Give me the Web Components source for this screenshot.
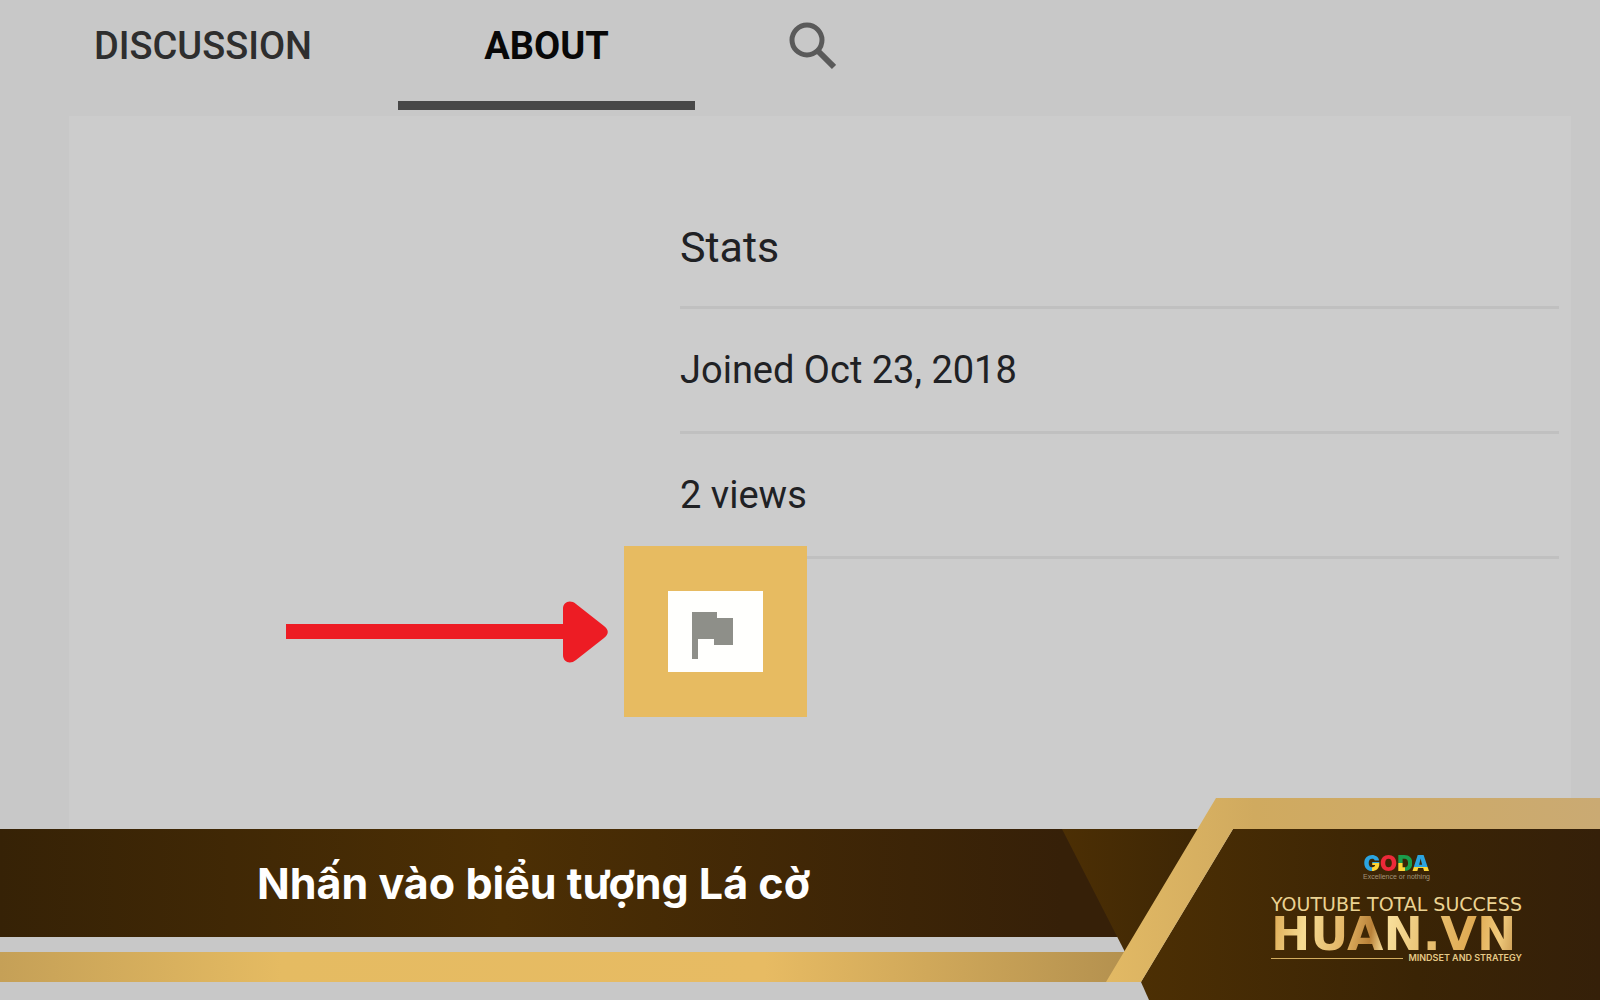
<!DOCTYPE html>
<html lang="vi">
<head>
<meta charset="UTF-8">
<meta name="viewport" content="width=device-width, initial-scale=1.0">
<title>HUAN.VN</title>
<style>
    body {
        margin: 0;
        background: #c8c8c8;
        font-family: Roboto, "Liberation Sans", sans-serif;
    }
</style>
</head>
<body>
<guide-slide>
    <channel-tabs slot="tabs">
        <channel-tab>DISCUSSION</channel-tab>
        <channel-tab active>ABOUT</channel-tab>
        <channel-tab narrow label="Search">
            <svg width="48" height="48" viewBox="0 0 48 48" fill="none" stroke="#5a5a5a" aria-hidden="true">
                <circle cx="19" cy="18" r="15" stroke-width="5"/>
                <path d="M29 28 46 45" stroke-width="6"/>
            </svg>
        </channel-tab>
    </channel-tabs>
    <about-panel>
        <stat-row heading>Stats</stat-row>
        <stat-row>Joined Oct 23, 2018</stat-row>
        <stat-row>2 views</stat-row>
        <flag-callout slot="callout"></flag-callout>
    </about-panel>
    <caption-banner slot="banner">
        Nhấn vào biểu tượng Lá cờ
        <brand-logo slot="logo"></brand-logo>
    </caption-banner>
</guide-slide>

<script>
    class GuideSlide extends HTMLElement {
        connectedCallback() {
            this.attachShadow({ mode: 'open' });
            this.shadowRoot.innerHTML = `
                <style>
                    :host {
                        display: grid;
                        grid-template-rows: auto 1fr 202px;
                        min-height: 100vh;
                        overflow: hidden;
                    }
                    main {
                        display: grid;
                        grid-row: 2 / 4;
                        grid-column: 1;
                        padding: 6px 29px 168px 69px;
                    }
                    footer {
                        grid-row: 3;
                        grid-column: 1;
                        z-index: 1;
                    }
                </style>
                <header><slot name="tabs"></slot></header>
                <main><slot></slot></main>
                <footer><slot name="banner"></slot></footer>
            `;
        }
    }

    class ChannelTabs extends HTMLElement {
        connectedCallback() {
            this.attachShadow({ mode: 'open' });
            this.shadowRoot.innerHTML = `
                <style>
                    :host {
                        display: block;
                    }
                    nav {
                        display: flex;
                        height: 110px;
                        padding-left: 8px;
                    }
                </style>
                <nav><slot></slot></nav>
            `;
        }
    }

    class ChannelTab extends HTMLElement {
        connectedCallback() {
            const label = this.getAttribute('label');
            this.attachShadow({ mode: 'open' });
            this.shadowRoot.innerHTML = `
                <style>
                    :host {
                        display: flex;
                        width: 390px;
                    }
                    :host([active]) {
                        width: 297px;
                    }
                    :host([narrow]) {
                        width: 234px;
                    }
                    button {
                        display: flex;
                        flex: 1;
                        align-items: center;
                        justify-content: center;
                        padding: 0 0 9px;
                        border: 0;
                        border-bottom: 9px solid transparent;
                        background: none;
                        color: #2e2e2e;
                        font: 500 38px/48px Roboto, "Liberation Sans", sans-serif;
                        cursor: pointer;
                    }
                    :host([active]) button {
                        border-color: #484848;
                        color: #080808;
                        font-weight: 700;
                    }
                </style>
                <button type="button" ${label ? `aria-label="${label}"` : ''}><slot></slot></button>
            `;
        }
    }

    class AboutPanel extends HTMLElement {
        connectedCallback() {
            this.attachShadow({ mode: 'open' });
            this.shadowRoot.innerHTML = `
                <style>
                    :host {
                        display: block;
                        position: relative;
                        padding: 68px 12px 0 611px;
                        background: #cccccc;
                    }
                    /* sits over the last divider */
                    .callout {
                        position: absolute;
                        left: 217px;
                        top: 430px;
                    }
                </style>
                <section><slot></slot></section>
                <div class="callout"><slot name="callout"></slot></div>
            `;
        }
    }

    class StatRow extends HTMLElement {
        connectedCallback() {
            this.attachShadow({ mode: 'open' });
            this.shadowRoot.innerHTML = `
                <style>
                    :host {
                        display: flex;
                        align-items: center;
                        box-sizing: border-box;
                        height: 125px;
                        border-bottom: 3px solid #c0c0c0;
                        color: #202124;
                        font-size: 38px;
                        line-height: 48px;
                    }
                    :host([heading]) {
                        padding-top: 4px;
                        font-size: 43px;
                    }
                </style>
                <slot></slot>
            `;
        }
    }

    class FlagCallout extends HTMLElement {
        connectedCallback() {
            this.attachShadow({ mode: 'open' });
            this.shadowRoot.innerHTML = `
                <style>
                    :host {
                        display: flex;
                        align-items: center;
                        gap: 16px;
                    }
                    button {
                        display: flex;
                        align-items: center;
                        justify-content: center;
                        box-sizing: content-box;
                        width: 95px;
                        height: 81px;
                        padding: 0;
                        border: solid #e7bb61;
                        border-width: 45px 44px;
                        background: #fffffd;
                        cursor: pointer;
                    }
                </style>
                <svg width="322" height="62" viewBox="0 0 322 62" fill="#ed1c24" aria-hidden="true">
                    <path d="M0 23H277V8C277 1 284-2 290 3L318 25C323 29 323 33 318 37L290 59C284 64 277 61 277 54V38H0Z"/>
                </svg>
                <button type="button" aria-label="Flag">
                    <svg width="47" height="55" viewBox="0 0 47 55" fill="#8e8f89" aria-hidden="true">
                        <path d="M0 8H25V14H41V41H22V35H6V55H0Z"/>
                    </svg>
                </button>
            `;
        }
    }

    class CaptionBanner extends HTMLElement {
        connectedCallback() {
            this.attachShadow({ mode: 'open' });
            this.shadowRoot.innerHTML = `
                <style>
                    :host {
                        display: grid;
                        grid-template-columns: 1067fr 533fr;
                        grid-template-rows: 31px 108px 63px;
                        height: 202px;
                    }
                    .shapes {
                        grid-area: 1 / 1 / 4 / 3;
                        width: 100%;
                        height: 202px;
                    }
                    h1 {
                        grid-area: 2 / 1;
                        align-self: center;
                        margin: 0;
                        color: #ffffff;
                        font: 700 43px/50px Inter, "Open Sans", sans-serif;
                        text-align: center;
                    }
                    .logo {
                        grid-area: 2 / 2 / 4 / 3;
                        padding: 24px 0 0 204px;
                    }
                </style>
                <svg class="shapes" viewBox="0 0 1600 202" preserveAspectRatio="none" aria-hidden="true">
                    <defs>
                        <linearGradient id="bar">
                            <stop offset="0" stop-color="#362206"/>
                            <stop offset=".45" stop-color="#4c2f04"/>
                            <stop offset=".95" stop-color="#362008"/>
                        </linearGradient>
                        <linearGradient id="stripe">
                            <stop offset="0" stop-color="#c5a057"/>
                            <stop offset=".25" stop-color="#e5bb62"/>
                            <stop offset=".68" stop-color="#e7bb63"/>
                            <stop offset="1" stop-color="#b4914f"/>
                        </linearGradient>
                        <linearGradient id="fold">
                            <stop offset="0" stop-color="#4c2f04"/>
                            <stop offset="1" stop-color="#3d2605"/>
                        </linearGradient>
                        <linearGradient id="frame">
                            <stop offset="0" stop-color="#e2b964"/>
                            <stop offset=".3" stop-color="#d0aa5f"/>
                            <stop offset="1" stop-color="#caaa73"/>
                        </linearGradient>
                        <linearGradient id="card">
                            <stop offset="0" stop-color="#4c2f04"/>
                            <stop offset=".6" stop-color="#3a2405"/>
                            <stop offset="1" stop-color="#352009"/>
                        </linearGradient>
                    </defs>
                    <path d="M0 31H1080L1118 139H0Z" fill="url(#bar)"/>
                    <path d="M0 154H1125V184H0Z" fill="url(#stripe)"/>
                    <path d="M1062 31H1205L1125 154Z" fill="url(#fold)"/>
                    <path d="M1233 31H1600V202H1149L1141 184Z" fill="url(#card)"/>
                    <path d="M1216 0H1600V31H1233L1141 184H1106Z" fill="url(#frame)"/>
                </svg>
                <h1><slot></slot></h1>
                <div class="logo"><slot name="logo"></slot></div>
            `;
        }
    }

    class BrandLogo extends HTMLElement {
        connectedCallback() {
            this.attachShadow({ mode: 'open' });
            this.shadowRoot.innerHTML = `
                <style>
                    :host {
                        display: flex;
                        flex-direction: column;
                        width: 251px;
                        white-space: nowrap;
                    }
                    .goda {
                        align-self: center;
                        font: 900 22px/20px Inter, sans-serif;
                    }
                    .goda span, .name {
                        background-clip: text;
                        -webkit-background-clip: text;
                        color: transparent;
                    }
                    .g { background-image: conic-gradient(from 90deg, #fcd535 25%, #2ba4e0 0); }
                    .o { background-image: linear-gradient(#ed2939, #ed2939); }
                    .d { background-image: conic-gradient(from 180deg, #fcd535 25%, #1a9e4b 0); }
                    .a { background-image: linear-gradient(#2ba4e0 65%, #fcd535 0); }
                    .motto {
                        align-self: center;
                        color: #a39479;
                        font: 7px/8px "Liberation Sans", sans-serif;
                    }
                    .course {
                        margin-top: 12px;
                        color: #ecd393;
                        font: 19px/22px "DejaVu Sans", sans-serif;
                    }
                    .name {
                        background-image: linear-gradient(100deg, #dca850, #f6dc93 14%, #e3b565 30%, #b98138 40%, #f8df9b 46%, #eac477 60%, #dfa951 80%, #f0ca7c 90%, #bd8a43);
                        font: 700 47px/38px "DejaVu Sans", sans-serif;
                    }
                    .foot {
                        display: flex;
                        align-items: center;
                        gap: 5px;
                        color: #e6ca87;
                        font: 600 9px/10px Inter, sans-serif;
                    }
                    .foot i {
                        flex: 1;
                        height: 1px;
                        background: #d3ad5f;
                    }
                </style>
                <div class="goda"><span class="g">G</span><span class="o">O</span><span class="d">D</span><span class="a">A</span></div>
                <div class="motto">Excellence or nothing</div>
                <div class="course">YOUTUBE TOTAL SUCCESS</div>
                <div class="name">HUAN.VN</div>
                <div class="foot"><i></i>MINDSET AND STRATEGY</div>
            `;
        }
    }

    customElements.define('guide-slide', GuideSlide);
    customElements.define('channel-tabs', ChannelTabs);
    customElements.define('channel-tab', ChannelTab);
    customElements.define('about-panel', AboutPanel);
    customElements.define('stat-row', StatRow);
    customElements.define('flag-callout', FlagCallout);
    customElements.define('caption-banner', CaptionBanner);
    customElements.define('brand-logo', BrandLogo);
</script>
</body>
</html>
